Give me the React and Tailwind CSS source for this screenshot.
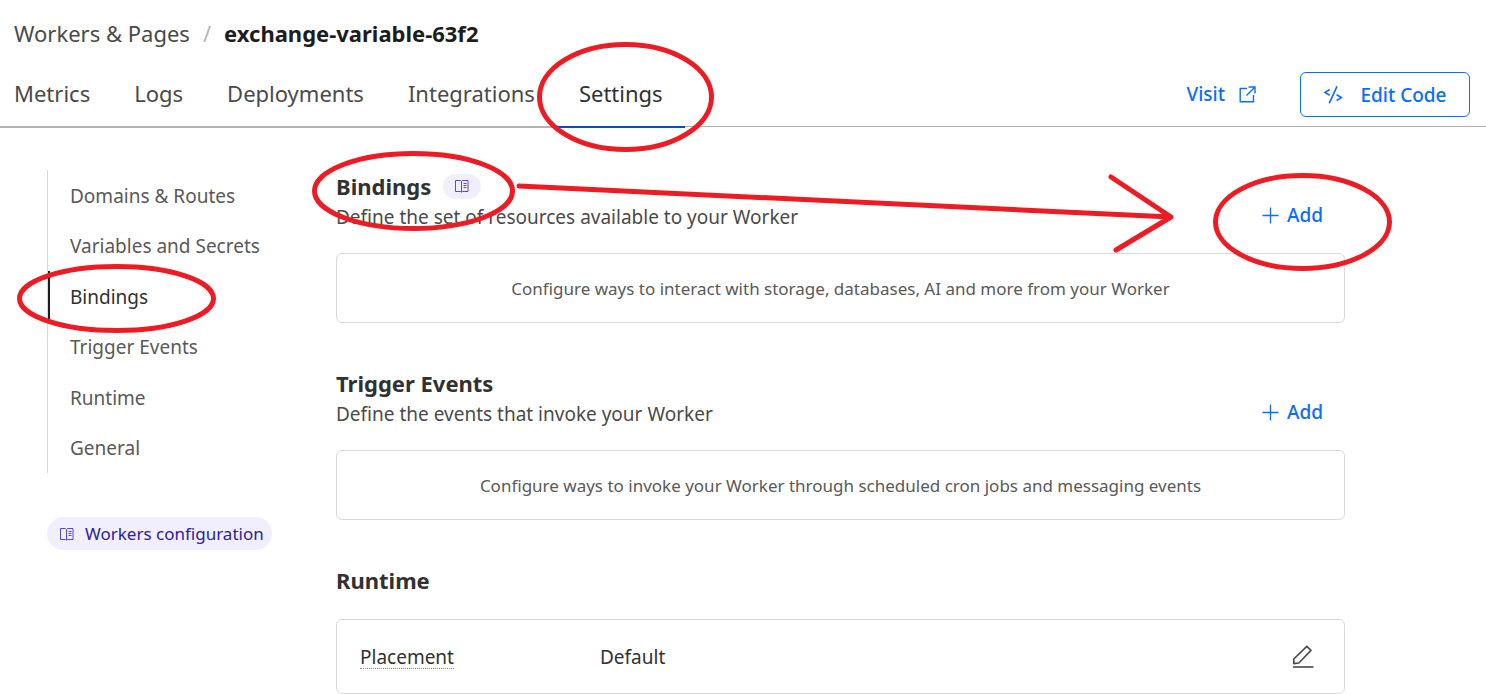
const tabs = ['Metrics', 'Logs', 'Deployments', 'Integrations', 'Settings'];
const links = ['Domains & Routes', 'Variables and Secrets', 'Bindings', 'Trigger Events', 'Runtime', 'General'];

function BookIcon() {
  return (
    <svg width="16" height="14" viewBox="0 0 16 14" fill="none" stroke="currentColor" className="shrink-0" aria-hidden="true">
      <path d="M7.5 2.5L6.5 1.5H1.5v11h5l1 .6 1-.6h5.5v-11h-5.5l-1 1zM7.5 2.5v10.5" />
      <path d="M9.5 4.5h3M9.5 6.5h3M9.5 8.5h3" />
    </svg>
  );
}

function AddButton({ label }) {
  return (
    <button type="button" aria-label={label} className="mb-[2px] flex items-center gap-2 px-[22px] text-[19px] leading-[30px] font-medium text-[#0a6dff]">
      <svg width="17" height="17" viewBox="0 0 17 17" fill="none" stroke="currentColor" strokeWidth="1.3" aria-hidden="true">
        <path d="M8.5 0.5v16M0.5 8.5h16" />
      </svg>
      Add
    </button>
  );
}

function Section({ title, badge, description, empty, addLabel }) {
  return (
    <section>
      <div className="flex items-end justify-between">
        <div>
          <div className="flex items-center gap-3">
            <h2 className="text-[22px] leading-[30px] font-bold text-[#313131]">{title}</h2>
            {badge && (
              <a href="#docs" aria-label="Bindings documentation" className="flex h-[25px] w-[38px] items-center justify-center rounded-full bg-[#f1effd] text-[#5746e0]">
                <BookIcon />
              </a>
            )}
          </div>
          <p className="pt-px text-[19px] leading-[30px] text-[#4a4a4a]">{description}</p>
        </div>
        <AddButton label={addLabel} />
      </div>
      <div className="mt-[21px] flex h-[70px] items-center justify-center rounded-md border border-[#d9d9d9] pt-[2px] text-[17px] text-[#595959]">
        {empty}
      </div>
    </section>
  );
}

function Annotations() {
  return (
    <svg className="pointer-events-none absolute top-0 left-0" width="1486" height="694" viewBox="0 0 1486 694" fill="none" stroke="#ed1c24" strokeWidth="5" strokeLinecap="round" strokeLinejoin="round" aria-hidden="true">
      <ellipse cx="625.5" cy="97" rx="86" ry="52.5" />
      <ellipse cx="116.5" cy="298.5" rx="97" ry="32" />
      <ellipse cx="413.5" cy="191" rx="99" ry="37.5" />
      <ellipse cx="1302.5" cy="222" rx="87" ry="46.5" />
      <path d="M519 186L1171 217M1111 177L1171 217L1116 250" />
    </svg>
  );
}

export default function App() {
  return (
    <div className="relative overflow-hidden bg-white font-['Noto_Sans','Noto_Sans_CJK_SC',sans-serif]">
      <header>
        <nav aria-label="Breadcrumb" className="flex h-[62px] items-center gap-[13px] px-[14px] pt-1 text-[22px]">
          <a href="#workers" className="text-[#4a4a4a]">Workers &amp; Pages</a>
          <span className="text-[#b5b5b5]">/</span>
          <span className="font-bold text-[#1d1d1d]">exchange-variable-63f2</span>
        </nav>
        <div className="flex items-start">
          <nav aria-label="Worker" className="flex text-[22px] leading-[62px] text-[#4a4a4a]">
            {tabs.map((t) => (
              <a
                key={t}
                href={'#' + t.toLowerCase()}
                aria-current={t === 'Settings' ? 'page' : undefined}
                className={'border-b-2 px-[22px] pb-[2px] first:pl-[14px] ' + (t === 'Settings' ? 'border-[#0051c3] text-[#313131]' : 'border-[#b2b2b2]')}
              >
                {t}
              </a>
            ))}
          </nav>
          <div className="flex h-[65px] flex-1 items-center justify-end gap-11 border-b border-[#b2b2b2] pr-4 text-[19px] font-medium text-[#0a6dff]">
            <a href="#visit" className="flex items-center gap-[14px] pt-px">
              Visit
              <svg width="17" height="17" viewBox="0 0 17 17" fill="none" stroke="currentColor" strokeWidth="1.4" aria-hidden="true">
                <path d="M8 2.5H1.2v13.3h13.3V9M9.5 1h6.5v6.5M16 1L7.5 9.5" />
              </svg>
            </a>
            <button type="button" className="flex h-[45px] w-[170px] items-center justify-center gap-[17px] rounded-md border border-[#0a6dff] pt-[2px]">
              <svg width="20" height="18" viewBox="0 0 20 18" fill="none" stroke="currentColor" strokeWidth="1.6" aria-hidden="true">
                <path d="M6.8 3.5L2 6.4L6.8 9.3M14 .3L6.2 17.4M13.6 8.7l4.8 2.9L13.6 14.5" />
              </svg>
              Edit Code
            </button>
          </div>
        </div>
      </header>

      <div className="flex pl-[47px] pr-[141px]">
        <aside className="w-[289px] shrink-0 pt-[42px]">
          <nav aria-label="Settings" className="grid h-[303px] auto-rows-fr border-l border-[#d9d9d9] text-[19px] text-[#595959]">
            {links.map((l) => (
              <a
                key={l}
                href="#section"
                className={'flex items-center border-l-2 pt-px pl-5 ' + (l === 'Bindings' ? 'border-[#1d1d1d] text-[#313131]' : 'border-transparent')}
              >
                {l}
              </a>
            ))}
          </nav>
          <a href="#configuration" className="mt-11 inline-flex h-[33px] items-center gap-[10px] rounded-full bg-[#f1effd] pr-2 pl-3 text-[17px] text-[#2c1ba0]">
            <span className="text-[#5746e0]"><BookIcon /></span>
            Workers configuration
          </a>
        </aside>

        <main className="flex min-w-0 flex-1 flex-col gap-[45px] pt-[43px]">
          <Section title="Bindings" badge description="Define the set of resources available to your Worker" empty="Configure ways to interact with storage, databases, AI and more from your Worker" addLabel="Add binding" />
          <Section title="Trigger Events" description="Define the events that invoke your Worker" empty="Configure ways to invoke your Worker through scheduled cron jobs and messaging events" addLabel="Add trigger event" />
          <section>
            <h2 className="text-[22px] leading-[30px] font-bold text-[#313131]">Runtime</h2>
            <div className="mt-6 flex h-[75px] items-center rounded-md border border-[#d9d9d9] px-[23px] pt-px text-[19px] text-[#313131]">
              <div className="w-[240px]">
                <span className="inline-block border-b border-dotted border-[#8a8a8a] leading-[22px]">Placement</span>
              </div>
              <span className="flex-1">Default</span>
              <button type="button" aria-label="Edit placement" className="mr-[6px] text-[#4a4a4a]">
                <svg width="23" height="24" viewBox="0 0 23 24" fill="none" stroke="currentColor" strokeWidth="1.6" aria-hidden="true">
                  <path d="M1.8 18.6V14L14.8 1.4L19 5.4L6.8 18L1.8 18.6Z" strokeLinejoin="round" />
                  <path d="M1 22h20.5" />
                </svg>
              </button>
            </div>
          </section>
        </main>
      </div>
      <Annotations />
    </div>
  );
}
